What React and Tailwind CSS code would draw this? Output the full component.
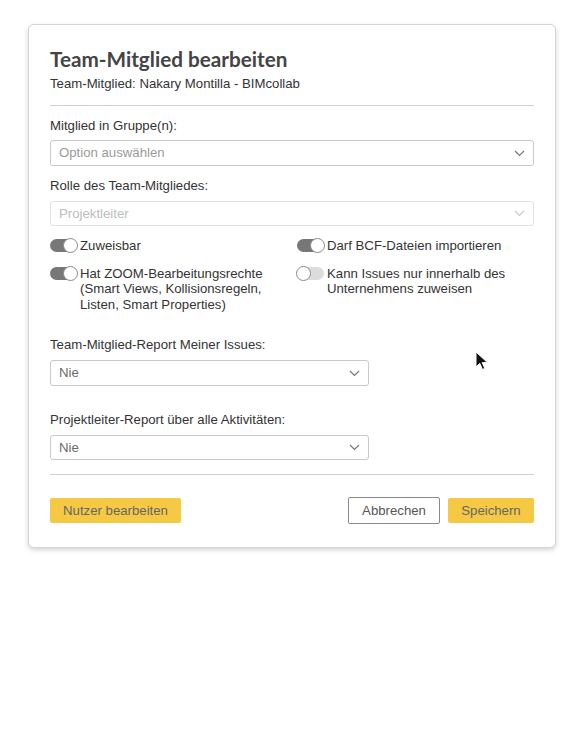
import React from 'react';

function Chevron({ color = '#777' }) {
    return (
        <svg width="11" height="7" viewBox="0 0 11 7" fill="none">
            <path d="M1 1l4.5 4.5L10 1" stroke={color} strokeWidth="1.2" />
        </svg>
    );
}

function Select({ value, muted, disabled, className = '' }) {
    return (
        <div
            className={`flex items-center justify-between rounded-[3px] border px-[8px] ${
                disabled ? 'border-[#e3e3e3] text-[#bdbdbd]' : 'border-[#c8c8c8]'
            } ${muted ? 'text-[#9a9a9a]' : ''} ${!disabled && !muted ? 'text-[#6b6b6b]' : ''} ${className}`}
        >
            <span className="text-[13.2px]">{value}</span>
            <Chevron color={disabled ? '#c8c8c8' : '#777'} />
        </div>
    );
}

function Toggle({ on }) {
    return (
        <div
            className={`relative mt-[1px] h-[13px] w-[27px] shrink-0 rounded-full ${
                on ? 'bg-[#777777]' : 'bg-[#dcdcdc]'
            }`}
        >
            <div
                className={`absolute top-[-1px] h-[15px] w-[15px] rounded-full border border-[#8a8a8a] bg-white ${
                    on ? 'right-[-1px]' : 'left-[-1px]'
                }`}
            />
        </div>
    );
}

function Switch({ on, children }) {
    return (
        <div className="flex items-start gap-[3px]">
            <Toggle on={on} />
            <span className="text-[13.2px] leading-[15.5px] text-[#333]">{children}</span>
        </div>
    );
}

export default function App() {
    return (
        <div className="relative min-h-[752px] bg-white pt-[24px] font-['Liberation_Sans',Arial,sans-serif]">
            <div className="ml-[28px] w-[528px] rounded-[6px] border border-[#d6d6d6] bg-white px-[21px] pb-[23px] pt-[20px] shadow-[0_2px_5px_rgba(0,0,0,0.18)]">
                <h1 className="font-['Lato',sans-serif] text-[20.7px] font-bold leading-[28px] text-[#444]">
                    Team-Mitglied bearbeiten
                </h1>
                <p className="mt-[1px] text-[13.2px] leading-[20px] text-[#333]">
                    Team-Mitglied: Nakary Montilla - BIMcollab
                </p>
                <div className="mt-[11px] border-t border-[#cfcfcf]" />

                <div className="mt-[10px] text-[13.2px] leading-[20px] text-[#333]">Mitglied in Gruppe(n):</div>
                <Select value="Option auswählen" muted className="mt-[4px] h-[26px]" />

                <div className="mt-[10px] text-[13.2px] leading-[20px] text-[#333]">Rolle des Team-Mitgliedes:</div>
                <Select value="Projektleiter" disabled className="mt-[5px] h-[25px]" />

                {/* Berechtigungen */}
                <div className="mt-[12px] grid grid-cols-[247px_1fr] gap-y-[12px]">
                    <Switch on>Zuweisbar</Switch>
                    <Switch on>Darf BCF-Dateien importieren</Switch>
                    <Switch on>
                        Hat ZOOM-Bearbeitungsrechte
                        <br />
                        (Smart Views, Kollisionsregeln,
                        <br />
                        Listen, Smart Properties)
                    </Switch>
                    <Switch on={false}>
                        Kann Issues nur innerhalb des
                        <br />
                        Unternehmens zuweisen
                    </Switch>
                </div>

                <div className="mt-[23px] text-[13.2px] leading-[20px] text-[#333]">Team-Mitglied-Report Meiner Issues:</div>
                <Select value="Nie" className="mt-[5px] h-[26px] w-[319px]" />

                <div className="mt-[24px] text-[13.2px] leading-[20px] text-[#333]">Projektleiter-Report über alle Aktivitäten:</div>
                <Select value="Nie" className="mt-[5px] h-[25px] w-[319px]" />

                <div className="mt-[14px] border-t border-[#cfcfcf]" />

                <div className="mt-[22px] flex items-center justify-between">
                    <button className="h-[25px] w-[131px] rounded-[2px] bg-[#f5c944] text-[13.2px] text-[#666]">
                        Nutzer bearbeiten
                    </button>
                    <div className="flex items-center gap-[8px]">
                        <button className="h-[27px] w-[92px] rounded-[2px] border border-[#8a8a8a] bg-white text-[13.2px] text-[#555]">
                            Abbrechen
                        </button>
                        <button className="h-[25px] w-[86px] rounded-[2px] bg-[#f5c944] text-[13.2px] text-[#666]">
                            Speichern
                        </button>
                    </div>
                </div>
            </div>

            {/* Mauszeiger */}
            <svg className="absolute left-[475px] top-[351px]" width="14" height="20" viewBox="0 0 14 20">
                <path d="M1 1v15l3.8-3.6 2.6 6 2.4-1-2.6-5.8H12.5z" fill="#111" stroke="#fff" strokeWidth="1" strokeLinejoin="round" />
            </svg>
        </div>
    );
}
